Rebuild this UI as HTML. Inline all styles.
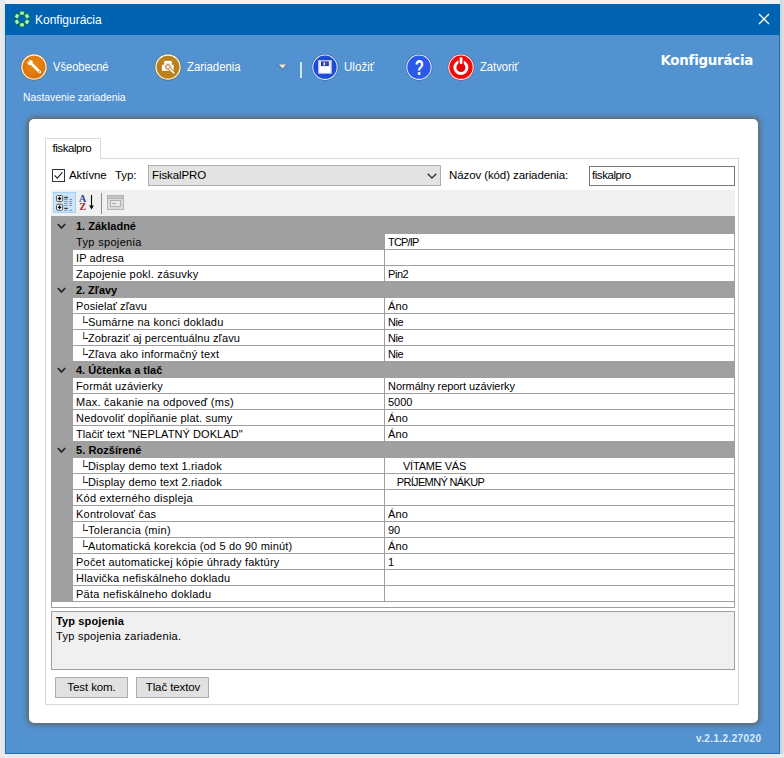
<!DOCTYPE html>
<html lang="sk">
<head>
<meta charset="utf-8">
<title>Konfigurácia</title>
<style>
*{box-sizing:border-box;margin:0;padding:0}
html,body{width:784px;height:758px;overflow:hidden}
body{background:#f1f1f1;font-family:"Liberation Sans",sans-serif;font-size:11px;color:#000;position:relative}
.abs{position:absolute}
#win{position:absolute;left:5px;top:4px;width:775px;height:750px;background:#5292d0;border-right:1px solid #2a69a8;border-bottom:1px solid #2a69a8;border-left:1px solid #336b9e}
#title{position:absolute;left:5px;top:4px;width:775px;height:31px;background:#0063b1}
#title .t{position:absolute;left:30px;top:9px;font-size:12px;color:#fff;white-space:nowrap}
.tb{position:absolute;color:#fff;font-size:12px;white-space:nowrap;transform-origin:0 50%}
.ic{position:absolute;width:30px;height:30px}
#panel{position:absolute;left:29px;top:119px;width:729px;height:604px;background:#fff;border-radius:5px;box-shadow:0 0 5.5px 1.5px rgba(98,98,98,.95)}
#tab{position:absolute;left:45px;top:138px;width:56px;height:21px;background:#fff;border:1px solid #d9d9d9;border-bottom:none;z-index:2}
#tab span{position:absolute;left:6.5px;top:3px;font-size:11.5px;letter-spacing:-0.45px}
#page{position:absolute;left:45px;top:158px;width:694px;height:547px;border:1px solid #d9d9d9;background:#fff}
.lbl{position:absolute;font-size:11.5px;white-space:nowrap;letter-spacing:-0.1px}
#grid{position:absolute;left:51px;top:216px;width:684px;height:392px;border:1px solid #a0a0a0;background:#fff}
#rows{position:absolute;left:51px;top:218px;width:684px;height:384px}
.row{position:absolute;left:0;width:683px;height:16px;white-space:nowrap;font-size:11px}
.row .g{position:absolute;left:0;top:0;width:22px;height:16px;background:#a0a0a0}
.row .n{position:absolute;left:22px;top:0;width:312px;height:16px;border-bottom:1px solid #a0a0a0;border-right:1px solid #a0a0a0;padding-left:3px;line-height:17px}
.row .v{position:absolute;left:334px;top:0;width:349px;height:16px;border-bottom:1px solid #a0a0a0;padding-left:3px;line-height:17px}
.row.cat{background:#a0a0a0;font-weight:bold}
.row.cat .c{position:absolute;left:25px;top:0;line-height:17px}
.row.sel .n{background:#a0a0a0}
.sub{display:inline-block;position:relative;width:8px;margin-left:4px}
.sub::after{content:"";position:absolute;left:6px;top:8px;width:2px;height:1px;background:#000}
.chev{position:absolute;left:6px;top:5px;width:9px;height:7px}
#desc{position:absolute;left:51px;top:611px;width:684px;height:59px;border:1px solid #a0a0a0;background:#f0f0f0;font-size:11px}
.btn{position:absolute;height:21px;top:677px;background:#e1e1e1;border:1px solid #adadad;font-size:11.5px;text-align:center;line-height:18px;letter-spacing:-0.1px}
</style>
</head>
<body>
<div class="abs" style="left:0;top:0;width:5px;height:758px;background:linear-gradient(90deg,#f1e9e2,#e2e8ec 70%,#cce4fc 82%)"></div>
<div class="abs" style="left:780px;top:0;width:4px;height:758px;background:linear-gradient(90deg,#cfd2d6,#d8dfe6)"></div>
<div class="abs" style="left:0;top:754px;width:784px;height:4px;background:#e9e9e9"></div>
<div id="win"></div>
<div id="title">
  <svg class="abs" style="left:8px;top:6px" width="18" height="18" viewBox="0 0 18 18">
    <circle cx="9" cy="9" r="5.8" fill="none" stroke="#0a5c34" stroke-width="3.4" opacity=".6"/>
    <g fill="#a4fdae" stroke="#0c6034" stroke-width="0.5"><rect x="-2.2" y="-1.85" width="4.4" height="3.7" rx="0.9" transform="translate(9.00 3.20) rotate(0)"/><rect x="-2.2" y="-1.85" width="4.4" height="3.7" rx="0.9" transform="translate(14.02 6.10) rotate(60)"/><rect x="-2.2" y="-1.85" width="4.4" height="3.7" rx="0.9" transform="translate(14.02 11.90) rotate(120)"/><rect x="-2.2" y="-1.85" width="4.4" height="3.7" rx="0.9" transform="translate(9.00 14.80) rotate(180)"/><rect x="-2.2" y="-1.85" width="4.4" height="3.7" rx="0.9" transform="translate(3.98 11.90) rotate(240)"/><rect x="-2.2" y="-1.85" width="4.4" height="3.7" rx="0.9" transform="translate(3.98 6.10) rotate(300)"/></g>
  </svg>
  <div class="t">Konfigurácia</div>
  <svg class="abs" style="left:753px;top:9px" width="12" height="12" viewBox="0 0 12 12"><path d="M1 1 L11 11 M11 1 L1 11" stroke="#fff" stroke-width="1.3" fill="none"/></svg>
</div>

<!-- toolbar -->
<svg class="ic" style="left:19px;top:52px" viewBox="0 0 30 30"><g transform="translate(1.50 1.60)">
  <defs><radialGradient id="gw" cx="50%" cy="40%" r="60%"><stop offset="0" stop-color="#ee8a10"/><stop offset="1" stop-color="#d8700a"/></radialGradient></defs>
  <circle cx="13.5" cy="13.5" r="13.3" fill="#8a5a20" opacity=".75"/>
  <circle cx="13.5" cy="13.5" r="12.1" fill="url(#gw)" stroke="#fbf0e0" stroke-width="1.3"/>
  <path d="M10.4 9.7 L19.3 18.4" stroke="#fff" stroke-width="2.7" stroke-linecap="round"/>
  <circle cx="9.7" cy="8.9" r="2.6" fill="#fff"/>
  <path d="M9.5 8.7 L7.5 5.2 L5.6 7.2 Z" fill="#e27c0c"/>
  <circle cx="18.9" cy="18.2" r="0.75" fill="#c8802a"/>
</g></svg>
<div class="tb" style="left:53px;top:60px;transform:scaleX(0.925)">Všeobecné</div>

<svg class="ic" style="left:153px;top:52px" viewBox="0 0 30 30"><g transform="translate(1.50 1.60)">
  <circle cx="13.5" cy="13.5" r="13.3" fill="#6a4a18" opacity=".75"/>
  <circle cx="13.5" cy="13.5" r="12.1" fill="#b9801c" stroke="#fbf4e8" stroke-width="1.3"/>
  <rect x="9.7" y="7.3" width="7.6" height="4.4" fill="#fff"/>
  <rect x="7.4" y="11.1" width="11.8" height="6.2" fill="#fff6ea"/>
  <rect x="11.3" y="9.6" width="4.4" height="1.2" fill="#e8d8c0"/>
  <path d="M15 15 L19.3 19.4" stroke="#b07a22" stroke-width="3.4" stroke-linecap="round"/>
  <circle cx="13.4" cy="13.3" r="2.3" fill="#f8ecdc" stroke="#9c7844" stroke-width="1"/>
  <path d="M15.2 15.2 L19.2 19.3" stroke="#fff6ec" stroke-width="1.8" stroke-linecap="round"/>
</g></svg>
<div class="tb" style="left:186.5px;top:60px;transform:scaleX(0.945)">Zariadenia</div>

<svg class="abs" style="left:277px;top:64px" width="11" height="7" viewBox="0 0 11 7"><path d="M0.5 0.5 H10.5 L5.5 6 Z" fill="#5a6a80" opacity=".7"/><path d="M1.8 0.6 H9.2 L5.5 4.4 Z" fill="#f0e6dc"/></svg>
<div class="abs" style="left:300px;top:62px;width:2px;height:16px;background:rgba(232,244,255,.85)"></div>

<svg class="ic" style="left:310px;top:52px" viewBox="0 0 30 30"><g transform="translate(1.50 1.70)">
  <circle cx="13.5" cy="13.5" r="13.3" fill="#2a4a90" opacity=".7"/>
  <circle cx="13.5" cy="13.5" r="12.2" fill="#1c4cd6" stroke="#dfeaff" stroke-width="1.1"/>
  <rect x="6.6" y="6.4" width="13.7" height="13.7" fill="#c9ccf6"/>
  <rect x="7.7" y="7.5" width="11.5" height="11.5" fill="#eceefd"/>
  <rect x="8.3" y="13.4" width="10.3" height="5.4" fill="#fff"/>
  <rect x="9.5" y="7.7" width="7.8" height="4.6" fill="#2636a6"/>
  <rect x="11.9" y="8.6" width="1.7" height="3.1" fill="#e8ecff"/>
  <rect x="14.6" y="8.6" width="1.2" height="2.4" fill="#5a68c8"/>
</g></svg>
<div class="tb" style="left:344px;top:60px;transform:scaleX(0.965)">Uložiť</div>

<svg class="ic" style="left:404px;top:52px" viewBox="0 0 30 30"><g transform="translate(1.50 1.70)">
  <circle cx="13.5" cy="13.5" r="13.3" fill="#2a4a90" opacity=".7"/>
  <circle cx="13.5" cy="13.5" r="12.2" fill="#2a5aea" stroke="#dfe8ff" stroke-width="1.1"/>
  <text transform="translate(13.85 21.6) scale(0.68 1)" text-anchor="middle" font-family="Liberation Sans, sans-serif" font-weight="bold" font-size="22" fill="#fff">?</text>
</g></svg>

<svg class="ic" style="left:446px;top:52px" viewBox="0 0 30 30"><g transform="translate(1.50 1.70)">
  <circle cx="13.5" cy="13.5" r="13.3" fill="#903030" opacity=".7"/>
  <circle cx="13.5" cy="13.5" r="12.2" fill="#f00a0a" stroke="#ffe6e6" stroke-width="1.1"/>
  <circle cx="13.4" cy="13.8" r="6" fill="#e00808" stroke="#fff" stroke-width="2.9"/>
  <rect x="10.9" y="4.6" width="5.4" height="6.3" fill="#ee0a0a"/>
  <rect x="12.2" y="3.5" width="2.7" height="6.8" rx="1" fill="#fff"/>
</g></svg>
<div class="tb" style="left:480px;top:60px;transform:scaleX(0.935)">Zatvoriť</div>

<div class="abs" style="left:660.5px;top:53px;color:#fff;font-family:'DejaVu Sans',sans-serif;font-weight:bold;font-size:13.33px;line-height:16px;letter-spacing:-0.22px;white-space:nowrap">Konfigurácia</div>
<div class="tb" style="left:23px;top:91px;font-size:11px;transform:scaleX(0.943)">Nastavenie zariadenia</div>

<div id="panel"></div>
<div id="tab"><span>fiskalpro</span></div>
<div id="page"></div>

<!-- row: checkbox, type, name -->
<div class="abs" style="left:52px;top:169px;width:13px;height:13px;border:1px solid #333;background:#fff"></div>
<svg class="abs" style="left:52px;top:169px" width="13" height="13" viewBox="0 0 13 13"><path d="M2.6 6.4 L5.2 9.2 L10.4 3.4" fill="none" stroke="#222" stroke-width="1.1"/></svg>
<div class="lbl" style="left:69px;top:169px">Aktívne</div>
<div class="lbl" style="left:115px;top:169px">Typ:</div>
<div class="abs" style="left:148px;top:165px;width:293px;height:21px;background:#e3e3e3;border:1px solid #adadad"></div>
<div class="lbl" style="left:152px;top:169px">FiskalPRO</div>
<svg class="abs" style="left:427px;top:173px" width="10" height="6" viewBox="0 0 10 6"><path d="M0.7 0.7 L5 5 L9.3 0.7" fill="none" stroke="#333" stroke-width="1.3"/></svg>
<div class="lbl" style="left:449px;top:169px">Názov (kód) zariadenia:</div>
<div class="abs" style="left:589px;top:166px;width:146px;height:20px;background:#fff;border:1px solid #7a7a7a"></div>
<div class="lbl" style="left:592px;top:169px;letter-spacing:-0.45px">fiskalpro</div>

<!-- propertygrid toolbar -->
<div class="abs" style="left:51px;top:190px;width:684px;height:26px;background:#f0f0f0"></div>
<div class="abs" style="left:53px;top:192px;width:23px;height:21px;background:#cce4f7;border:1px solid #a6d2f6"></div>
<svg class="abs" style="left:56px;top:195px" width="17" height="16" viewBox="0 0 17 16">
  <rect x="0.5" y="0.5" width="6.2" height="6" rx="1.3" fill="#eef4fb" stroke="#5a5a5a"/>
  <path d="M1.9 3.5 H5.3 M3.6 1.8 V5.2" stroke="#000" stroke-width="1.3"/>
  <rect x="0.5" y="9.3" width="6.2" height="6" rx="1.3" fill="#eef4fb" stroke="#5a5a5a"/>
  <path d="M1.9 12.3 H5.3 M3.6 10.6 V14" stroke="#000" stroke-width="1.3"/>
  <path d="M8.2 2.5 H11.9 M8.2 13.3 H11.9" stroke="#303840" stroke-width="1.3"/>
  <path d="M8.2 4.5 H11.6 M13.2 4.5 H16 M8.2 6.5 H11.6 M13.2 6.5 H16 M8.2 8.4 H11.6 M13.2 8.4 H16 M8.2 10.4 H11.6 M13.2 10.4 H16 M8.2 15.3 H11.6 M13.2 15.3 H16" stroke="#7c94b4" stroke-width="1"/>
</svg>
<div class="abs" style="left:79px;top:194px;font-family:'Liberation Serif',serif;font-weight:bold;font-size:10px;line-height:9px;color:#2a3f9a">A</div>
<div class="abs" style="left:79.5px;top:202px;font-family:'Liberation Serif',serif;font-weight:bold;font-size:10px;line-height:9px;color:#a02828">Z</div>
<svg class="abs" style="left:88px;top:195px" width="7" height="16" viewBox="0 0 7 16"><path d="M3.5 0 V13" stroke="#000" stroke-width="1.1"/><path d="M1.2 10.4 L3.5 14.6 L5.8 10.4 Z" fill="#000"/></svg>
<div class="abs" style="left:101px;top:193px;width:1px;height:21px;background:#8a8a8a"></div>
<svg class="abs" style="left:107px;top:195px" width="17" height="16" viewBox="0 0 17 16">
  <rect x="0.5" y="0.5" width="16" height="14" fill="#dcdcdc" stroke="#b4b4b4"/>
  <rect x="0.5" y="0.5" width="16" height="3" fill="#c4c4c4" stroke="#b4b4b4"/>
  <rect x="3.5" y="5.5" width="10" height="6" fill="#e8e8e8" stroke="#b0b0b0"/>
  <path d="M5 8.5 H9" stroke="#aaa"/>
</svg>

<div id="grid"></div>
<div class="abs" style="left:51px;top:216px;width:684px;height:2px;background:#a0a0a0"></div>
<div id="rows">
<!--ROWS-->
<div class="row cat" style="top:0px"><svg class="chev" viewBox="0 0 9 7"><path d="M0.8 1 L4.5 5 L8.2 1" fill="none" stroke="#222" stroke-width="1.7"/></svg><span class="c" style="letter-spacing:0.007px">1. Základné</span></div>
<div class="row sel" style="top:16px"><div class="g"></div><div class="n"><span style="letter-spacing:0.336px">Typ spojenia</span></div><div class="v" style="letter-spacing:-0.809px">TCP/IP</div></div>
<div class="row" style="top:32px"><div class="g"></div><div class="n"><span style="letter-spacing:0.123px">IP adresa</span></div><div class="v"></div></div>
<div class="row" style="top:48px"><div class="g"></div><div class="n"><span style="letter-spacing:0.221px">Zapojenie pokl. zásuvky</span></div><div class="v" style="letter-spacing:-0.433px">Pin2</div></div>
<div class="row cat" style="top:64px"><svg class="chev" viewBox="0 0 9 7"><path d="M0.8 1 L4.5 5 L8.2 1" fill="none" stroke="#222" stroke-width="1.7"/></svg><span class="c" style="letter-spacing:-0.043px">2. Zľavy</span></div>
<div class="row" style="top:80px"><div class="g"></div><div class="n"><span style="letter-spacing:0.093px">Posielať zľavu</span></div><div class="v" style="letter-spacing:0.174px">Áno</div></div>
<div class="row" style="top:96px"><div class="g"></div><div class="n"><span class="sub">└</span><span style="letter-spacing:0.219px">Sumárne na konci dokladu</span></div><div class="v" style="letter-spacing:-0.405px">Nie</div></div>
<div class="row" style="top:112px"><div class="g"></div><div class="n"><span class="sub">└</span><span style="letter-spacing:0.114px">Zobraziť aj percentuálnu zľavu</span></div><div class="v" style="letter-spacing:-0.405px">Nie</div></div>
<div class="row" style="top:128px"><div class="g"></div><div class="n"><span class="sub">└</span><span style="letter-spacing:0.204px">Zľava ako informačný text</span></div><div class="v" style="letter-spacing:-0.405px">Nie</div></div>
<div class="row cat" style="top:144px"><svg class="chev" viewBox="0 0 9 7"><path d="M0.8 1 L4.5 5 L8.2 1" fill="none" stroke="#222" stroke-width="1.7"/></svg><span class="c" style="letter-spacing:0.005px">4. Účtenka a tlač</span></div>
<div class="row" style="top:160px"><div class="g"></div><div class="n"><span style="letter-spacing:0.153px">Formát uzávierky</span></div><div class="v" style="letter-spacing:-0.059px">Normálny report uzávierky</div></div>
<div class="row" style="top:176px"><div class="g"></div><div class="n"><span style="letter-spacing:0.241px">Max. čakanie na odpoveď (ms)</span></div><div class="v" style="letter-spacing:-0.021px">5000</div></div>
<div class="row" style="top:192px"><div class="g"></div><div class="n"><span style="letter-spacing:0.187px">Nedovoliť dopĺňanie plat. sumy</span></div><div class="v" style="letter-spacing:0.174px">Áno</div></div>
<div class="row" style="top:208px"><div class="g"></div><div class="n"><span style="letter-spacing:0.074px">Tlačiť text &quot;NEPLATNÝ DOKLAD&quot;</span></div><div class="v" style="letter-spacing:0.174px">Áno</div></div>
<div class="row cat" style="top:224px"><svg class="chev" viewBox="0 0 9 7"><path d="M0.8 1 L4.5 5 L8.2 1" fill="none" stroke="#222" stroke-width="1.7"/></svg><span class="c" style="letter-spacing:0.057px">5. Rozšírené</span></div>
<div class="row" style="top:240px"><div class="g"></div><div class="n"><span class="sub">└</span><span style="letter-spacing:0.168px">Display demo text 1.riadok</span></div><div class="v" style="padding-left:18px;letter-spacing:-0.220px">VÍTAME VÁS</div></div>
<div class="row" style="top:256px"><div class="g"></div><div class="n"><span class="sub">└</span><span style="letter-spacing:0.168px">Display demo text 2.riadok</span></div><div class="v" style="padding-left:11.7px;letter-spacing:-0.648px">PRÍJEMNÝ NÁKUP</div></div>
<div class="row" style="top:272px"><div class="g"></div><div class="n"><span style="letter-spacing:0.226px">Kód externého displeja</span></div><div class="v"></div></div>
<div class="row" style="top:288px"><div class="g"></div><div class="n"><span style="letter-spacing:0.221px">Kontrolovať čas</span></div><div class="v" style="letter-spacing:0.174px">Áno</div></div>
<div class="row" style="top:304px"><div class="g"></div><div class="n"><span class="sub">└</span><span style="letter-spacing:0.291px">Tolerancia (min)</span></div><div class="v" style="letter-spacing:-0.075px">90</div></div>
<div class="row" style="top:320px"><div class="g"></div><div class="n"><span class="sub">└</span><span style="letter-spacing:0.193px">Automatická korekcia (od 5 do 90 minút)</span></div><div class="v" style="letter-spacing:0.174px">Áno</div></div>
<div class="row" style="top:336px"><div class="g"></div><div class="n"><span style="letter-spacing:0.217px">Počet automatickej kópie úhrady faktúry</span></div><div class="v">1</div></div>
<div class="row" style="top:352px"><div class="g"></div><div class="n"><span style="letter-spacing:0.218px">Hlavička nefiskálneho dokladu</span></div><div class="v"></div></div>
<div class="row" style="top:368px"><div class="g"></div><div class="n"><span style="letter-spacing:0.250px">Päta nefiskálneho dokladu</span></div><div class="v"></div></div>
<!--/ROWS-->
</div>

<div id="desc">
  <div class="abs" style="left:4px;top:3px;font-weight:bold;white-space:nowrap;letter-spacing:0.13px">Typ spojenia</div>
  <div class="abs" style="left:4px;top:18px;white-space:nowrap;letter-spacing:0.28px">Typ spojenia zariadenia.</div>
</div>
<div class="btn" style="left:55px;width:73px">Test kom.</div>
<div class="btn" style="left:136px;width:73px;padding-left:1px">Tlač textov</div>

<div class="abs" style="left:696px;top:733px;font-weight:bold;font-size:10px;line-height:12px;letter-spacing:0.38px;color:#dcebfa;white-space:nowrap">v.2.1.2.27020</div>
</body>
</html>
